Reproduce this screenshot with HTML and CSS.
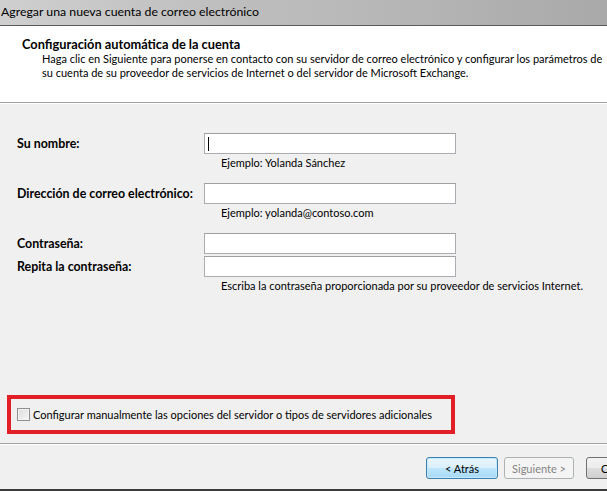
FILE: index.html
```html
<!DOCTYPE html>
<html lang="es">
<head>
    <meta charset="UTF-8">
    <title>Agregar una nueva cuenta de correo electrónico</title>
    <link rel="stylesheet" href="styles.css">
</head>
<body>
    <div class="dialog">
        <div class="titlebar">Agregar una nueva cuenta de correo electrónico</div>
        <div class="header">
            <h3>Configuración automática de la cuenta</h3>
            <p>Haga clic en Siguiente para ponerse en contacto con su servidor de correo electrónico y configurar los parámetros de<br>su cuenta de su proveedor de servicios de Internet o del servidor de Microsoft Exchange.</p>
        </div>
        <div class="content">
            <div class="form">
                <div class="row">
                    <label>Su nombre:</label>
                    <div class="field focused"><span class="caret"></span></div>
                </div>
                <div class="hint">Ejemplo: Yolanda Sánchez</div>
                <div class="row spaced">
                    <label>Dirección de correo electrónico:</label>
                    <div class="field"></div>
                </div>
                <div class="hint">Ejemplo: yolanda@contoso.com</div>
                <div class="row spaced">
                    <label>Contraseña:</label>
                    <div class="field"></div>
                </div>
                <div class="row tight">
                    <label>Repita la contraseña:</label>
                    <div class="field"></div>
                </div>
                <div class="hint">Escriba la contraseña proporcionada por su proveedor de servicios Internet.</div>
            </div>
            <div class="manual">
                <span class="checkbox"></span>
                <span>Configurar manualmente las opciones del servidor o tipos de servidores adicionales</span>
            </div>
        </div>
        <div class="footer">
            <button class="btn default">&lt; Atrás</button>
            <button class="btn disabled">Siguiente &gt;</button>
            <button class="btn cancel">Cancelar</button>
        </div>
    </div>
</body>
</html>
```

FILE: styles.css
```css
body {
    margin: 0;
    font-family: Lato, "Open Sans", sans-serif;
    font-size: 11px;
    color: #000;
    background: #f0f0f0;
}
.dialog {
    width: 607px;
    height: 491px;
    overflow: hidden;
    display: flex;
    flex-direction: column;
    background: #f0f0f0;
}
.titlebar {
    height: 25px;
    line-height: 24px;
    padding-left: 1px;
    font-size: 12.3px;
    background: linear-gradient(90deg, #cfcfcf 0%, #bdbdbd 40%, #b8b8b8 60%, #a9a9a9 100%);
    border-bottom: 1px solid #5a5a5a;
    white-space: nowrap;
}
.header {
    height: 77px;
    background: #fff;
    border-bottom: 1px solid #a0a0a0;
    box-shadow: 0 1px 0 #fff;
    padding: 11px 0 0 22px;
    box-sizing: border-box;
}
h3 {
    margin: 0;
    font-size: 12.8px;
    font-weight: bold;
    line-height: 15px;
}
.header p {
    margin: 0;
    padding-left: 20px;
    line-height: 14px;
    white-space: nowrap;
}
.content {
    flex: 1;
    display: flex;
    flex-direction: column;
    justify-content: space-between;
    padding: 30px 0 9px 7px;
}
.form {
    padding-left: 10px;
    display: flex;
    flex-direction: column;
}
.row {
    display: flex;
    align-items: center;
    height: 21px;
}
.row.spaced {
    margin-top: 13px;
}
.row.tight {
    margin-top: 2px;
}
.row label {
    width: 187px;
    font-size: 12.4px;
    font-weight: bold;
}
.field {
    width: 252px;
    height: 21px;
    box-sizing: border-box;
    background: #fff;
    border: 1px solid #abadb3;
    border-top-color: #a0a0a0;
    display: flex;
    align-items: center;
    padding-left: 3px;
}
.caret {
    width: 1px;
    height: 14px;
    background: #000;
}
.hint {
    margin-top: 1px;
    padding-left: 204px;
    line-height: 15px;
    white-space: nowrap;
}
.manual {
    width: 448px;
    height: 39px;
    box-sizing: border-box;
    border: 4px solid #e21f26;
    display: flex;
    align-items: center;
    gap: 3px;
    padding-left: 6px;
    white-space: nowrap;
}
.checkbox {
    width: 13px;
    height: 13px;
    flex-shrink: 0;
    box-sizing: border-box;
    border: 1px solid #8f8f8f;
    background: linear-gradient(135deg, #dcdcdc, #f8f8f8);
    box-shadow: inset 0 0 0 1px #f4f4f4;
}
.footer {
    height: 48px;
    box-sizing: border-box;
    border-top: 1px solid #a0a0a0;
    box-shadow: inset 0 1px 0 #fff;
    border-bottom: 2px solid #3a3a3a;
    display: flex;
    align-items: flex-start;
    padding: 13px 0 0 426px;
    gap: 6px;
}
.btn {
    flex-shrink: 0;
    height: 22px;
    width: 72px;
    padding: 0;
    font-family: inherit;
    font-size: 11px;
    border-radius: 3px;
    border: 1px solid #707070;
    background: linear-gradient(#f2f2f2 0%, #ebebeb 50%, #dddddd 51%, #cfcfcf 100%);
    color: #000;
}
.btn.default {
    border-color: #3c7fb1;
    background: linear-gradient(#eaf6fd 0%, #d9f0fc 50%, #bee6fd 51%, #a7d9f5 100%);
    box-shadow: inset 0 0 0 1px #c5e9fd;
}
.btn.disabled {
    width: 70px;
    border-color: #adb2b5;
    background: #f4f4f4;
    color: #838383;
}
.btn.cancel {
    margin-left: 6px;
}
```
